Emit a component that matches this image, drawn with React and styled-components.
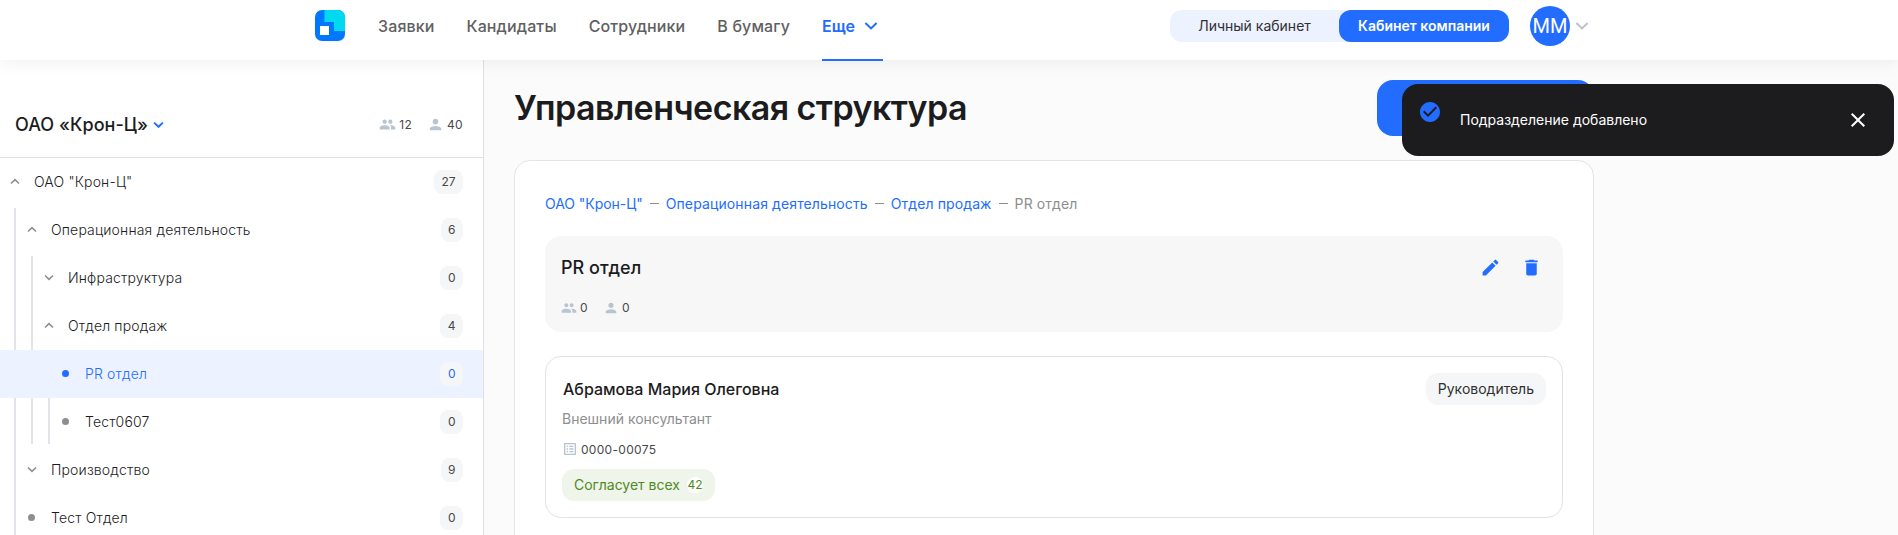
import React from "react";
import styled, { createGlobalStyle } from "styled-components";
import {
  MdPeople,
  MdPerson,
  MdEdit,
  MdDelete,
  MdCheckCircle,
  MdClose,
  MdOutlineListAlt,
} from "react-icons/md";

const color = {
  blue: "#226dff",
  pale: "#ecf2ff",
  ink: "#1c1c1e",
  nav: "#5f5f61",
  muted: "#8e8e90",
  icon: "#b8c4d0",
  line: "#e0e0e2",
  chip: "#f4f6f8",
};

const GlobalStyle = createGlobalStyle`
  *, *::before, *::after { box-sizing: border-box; }
  body {
    margin: 0;
    background: #fbfbfb;
    color: ${color.ink};
    font-family: Inter, "Liberation Sans", sans-serif;
    font-size: 14px;
    overflow: hidden;
  }
  button { font: inherit; border: 0; padding: 0; background: none; color: inherit; }
  h1, h2, h3, p { margin: 0; }
  svg { display: block; flex: none; }
`;

const Page = styled.div`
  height: 535px;
  display: flex;
  flex-direction: column;
  overflow: hidden;
`;

const Header = styled.header`
  position: relative;
  z-index: 2;
  flex: none;
  height: 60px;
  padding-left: 315px;
  display: flex;
  background: #fff;
  box-shadow: 0 0 20px rgba(0, 0, 0, 0.08);
`;

const Logo = styled.svg`
  width: 30px;
  height: 31px;
  margin-top: 10px;
`;

const Nav = styled.nav`
  display: flex;
  gap: 32px;
  margin-left: 33px;
  width: 792px;
`;

const NavItem = styled.a`
  display: flex;
  align-items: center;
  height: 61px;
  padding-bottom: ${(p) => (p.$active ? "8px" : "10px")};
  border-bottom: ${(p) => (p.$active ? `2px solid ${color.blue}` : "0")};
  color: ${(p) => (p.$active ? color.blue : color.nav)};
  font-size: 16px;
  font-weight: ${(p) => (p.$active ? 600 : 500)};
  letter-spacing: ${(p) => (p.$active ? 0 : "0.13px")};
  white-space: nowrap;
  svg { margin: 0 5px 0 9px; }
`;

const Switcher = styled.div`
  display: flex;
  width: 339px;
  height: 32px;
  margin-top: 10px;
  border-radius: 12px;
  background: ${color.pale};
`;

const SwitchOption = styled.button`
  width: ${(p) => (p.$active ? "170px" : "169px")};
  padding-bottom: 2px;
  border-radius: 12px;
  background: ${(p) => (p.$active ? color.blue : "transparent")};
  color: ${(p) => (p.$active ? "#fff" : "#303032")};
  font-weight: ${(p) => (p.$active ? 600 : 400)};
`;

const Account = styled.div`
  display: flex;
  align-items: center;
  gap: 5px;
  height: 40px;
  margin: 6px 0 0 21px;
`;

const Avatar = styled.div`
  display: grid;
  place-items: center;
  width: 40px;
  height: 40px;
  border-radius: 50%;
  background: ${color.blue};
  color: #fff;
  font-family: Roboto, sans-serif;
  font-size: 20px;
`;

const Body = styled.div`
  flex: 1;
  display: flex;
  min-height: 0;
`;

const Sidebar = styled.aside`
  flex: none;
  width: 484px;
  border-right: 1px solid ${color.line};
  background: #fff;
  overflow: hidden;
`;

const SidebarHead = styled.div`
  display: flex;
  align-items: center;
  height: 98px;
  padding: 32px 20px 0 15px;
  border-bottom: 1px solid ${color.line};
`;

const Company = styled.h2`
  display: flex;
  align-items: center;
  gap: 5px;
  margin-right: auto;
  font-size: 18px;
  font-weight: 500;
  letter-spacing: 0.05px;
`;

const Stats = styled.div`
  display: flex;
  gap: 15px;
`;

const Stat = styled.span`
  display: flex;
  align-items: center;
  gap: 3px;
  color: #48484a;
  font-size: 12px;
  letter-spacing: 0.3px;
  line-height: 16px;
  svg { color: ${color.icon}; }
`;

const Row = styled.div`
  display: flex;
  height: 48px;
  align-items: center;
  padding: 0 20px 0 7px;
  background: ${(p) => (p.$active ? color.pale : "transparent")};
  color: ${(p) => (p.$active ? color.blue : color.ink)};
`;

const Guide = styled.span`
  align-self: stretch;
  flex: none;
  width: 2px;
  margin: ${(p) => (p.$start ? 2 : 0)}px 8px ${(p) => (p.$end ? 2 : 0)}px 7px;
  background: ${(p) => (p.$hidden ? "transparent" : "#e0e4e8")};
`;

const Marker = styled.span`
  flex: none;
  display: grid;
  place-items: center;
  width: 16px;
  margin-right: 11px;
  padding-bottom: 1px;
  color: ${(p) => (p.$active ? color.blue : color.muted)};
`;

const Dot = styled.span`
  width: 7px;
  height: 7px;
  margin-right: 1px;
  border-radius: 50%;
  background: currentColor;
`;

const RowLabel = styled.span`
  flex: 1;
  padding-bottom: 1px;
  font-weight: 300;
  letter-spacing: 0.16px;
  white-space: nowrap;
`;

const Count = styled.span`
  display: grid;
  place-items: center;
  height: 24px;
  padding: 0 7.5px 1px;
  border-radius: 8px;
  background: ${color.chip};
  color: ${(p) => (p.$active ? color.blue : "#48484a")};
  font-size: 12px;
`;

const Main = styled.main`
  width: 1110px;
  padding: 20px 0 0 30px;
  display: flex;
  flex-direction: column;
`;

const TitleBar = styled.div`
  flex: none;
  display: flex;
  justify-content: space-between;
  height: 80px;
`;

const Title = styled.h1`
  line-height: 56px;
  font-size: 34px;
  font-weight: 600;
  letter-spacing: -0.54px;
  white-space: nowrap;
`;

const AddButton = styled.button`
  width: 217px;
  height: 56px;
  border-radius: 16px;
  background: ${color.blue};
`;

const Panel = styled.section`
  flex: none;
  height: 480px;
  padding: 32px 30px;
  border: 1px solid #e3e4e6;
  border-radius: 16px;
  background: #fff;
`;

const Crumbs = styled.div`
  display: flex;
  gap: 7px;
  height: 43px;
  line-height: 22px;
  white-space: nowrap;
`;

const Crumb = styled.a`
  color: ${(p) => (p.$current ? color.muted : color.blue)};
  letter-spacing: 0.12px;

  &:first-child { letter-spacing: -0.05px; }
`;

const CrumbDash = styled.i`
  width: 9px;
  height: 1px;
  margin-top: 10px;
  background: ${color.muted};
`;

const Unit = styled.div`
  display: flex;
  justify-content: space-between;
  height: 96px;
  padding: 21px 16px;
  border-radius: 16px;
  background: #f7f7f8;
`;

const UnitName = styled.h3`
  margin-bottom: 21px;
  font-size: 18px;
  font-weight: 500;
  line-height: 22px;
`;

const Actions = styled.div`
  display: flex;
  gap: 20px;
  padding-right: 5px;
  color: ${color.blue};
`;

const Person = styled.article`
  display: flex;
  justify-content: space-between;
  height: 162px;
  margin-top: 24px;
  padding: 16px;
  border: 1px solid #e2e3e8;
  border-radius: 16px;
`;

const PersonName = styled.h3`
  padding: 0 0 2px 1px;
  font-size: 16px;
  font-weight: 500;
  line-height: 32px;
`;

const Position = styled.p`
  margin-top: 2px;
  color: ${color.muted};
  line-height: 20px;
`;

const Code = styled.div`
  display: flex;
  align-items: center;
  gap: 3px;
  height: 16px;
  margin: 12px 0 12px;
  color: #48484a;
  font-size: 12px;
  letter-spacing: 0.3px;
  svg { color: ${color.icon}; }
`;

const Tag = styled.span`
  display: inline-flex;
  align-items: center;
  gap: 7px;
  height: 32px;
  padding: 0 12px 1px;
  border-radius: 12px;
  background: ${(p) => (p.$green ? "#f0f5eb" : color.chip)};
  color: ${(p) => (p.$green ? "#4f8a22" : "#303032")};
`;

const TagCount = styled.b`
  display: grid;
  place-items: center;
  width: 16px;
  height: 16px;
  border-radius: 50%;
  background: #fff;
  font-size: 12px;
  font-weight: 400;
`;

const Toast = styled.div`
  position: fixed;
  z-index: 5;
  top: 84px;
  right: 4px;
  display: flex;
  align-items: center;
  width: 492px;
  height: 72px;
  padding: 0 24px 0 16px;
  border-radius: 16px;
  background: #1c1c1e;
  color: #fff;
`;

const ToastIcon = styled.span`
  align-self: flex-start;
  margin: 16px 18px 0 0;
  color: ${color.blue};
`;

const ToastText = styled.span`
  flex: 1;
  padding-bottom: 2px;
`;

function Chevron({ width = 10, up, stroke = 2, tint = "currentColor" }) {
  return (
    <svg width={width} height={width * 0.7} viewBox="0 0 10 7" fill="none" stroke={tint} strokeWidth={stroke}>
      <path d={up ? "M1 5.500 5 1.700 9 5.500" : "M1 1.500 5 5.300 9 1.500"} />
    </svg>
  );
}

const units = [
  { name: 'ОАО "Крон-Ц"', count: 27, kind: "open", guides: [] },
  { name: "Операционная деятельность", count: 6, kind: "open", guides: ["start"] },
  { name: "Инфраструктура", count: 0, kind: "closed", guides: ["full", "start"] },
  { name: "Отдел продаж", count: 4, kind: "open", guides: ["full", "full"] },
  { name: "PR отдел", count: 0, kind: "leaf", active: true, guides: ["none", "none", "none"] },
  { name: "Тест0607", count: 0, kind: "leaf", guides: ["full", "end", "end"] },
  { name: "Производство", count: 9, kind: "closed", guides: ["full"] },
  { name: "Тест Отдел", count: 0, kind: "leaf", guides: ["full"] },
];

function TreeRow({ unit }) {
  return (
    <Row $active={unit.active}>
      {unit.guides.map((g, i) => (
        <Guide key={i} $start={g === "start"} $end={g === "end"} $hidden={g === "none"} />
      ))}
      <Marker $active={unit.active}>
        {unit.kind === "leaf" ? <Dot /> : <Chevron width={10} stroke={1.6} up={unit.kind === "open"} />}
      </Marker>
      <RowLabel>{unit.name}</RowLabel>
      <Count $active={unit.active}>{unit.count}</Count>
    </Row>
  );
}

const trail = ['ОАО "Крон-Ц"', "Операционная деятельность", "Отдел продаж"];

export default function App() {
  return (
    <Page>
      <GlobalStyle />
      <Header>
        <Logo viewBox="0 0 30 31">
          <rect width="30" height="31" rx="7" fill="#0077ff" />
          <path d="M9.500 0H23a7 7 0 0 1 7 7V21H19V12H9.500Z" fill="#00d9f0" />
          <rect x="5" y="16" width="9" height="9" fill="#fff" />
        </Logo>
        <Nav>
          <NavItem>Заявки</NavItem>
          <NavItem>Кандидаты</NavItem>
          <NavItem>Сотрудники</NavItem>
          <NavItem>В бумагу</NavItem>
          <NavItem $active>
            Еще <Chevron width={14} stroke={1.5} />
          </NavItem>
        </Nav>
        <Switcher>
          <SwitchOption>Личный кабинет</SwitchOption>
          <SwitchOption $active>Кабинет компании</SwitchOption>
        </Switcher>
        <Account>
          <Avatar>ММ</Avatar>
          <Chevron width={14} stroke={1.5} tint={color.icon} />
        </Account>
      </Header>
      <Body>
        <Sidebar>
          <SidebarHead>
            <Company>
              ОАО «Крон-Ц» <Chevron width={11} stroke={1.8} tint={color.blue} />
            </Company>
            <Stats>
              <Stat><MdPeople size={17} />12</Stat>
              <Stat><MdPerson size={17} />40</Stat>
            </Stats>
          </SidebarHead>
          {units.map((unit) => (
            <TreeRow key={unit.name} unit={unit} />
          ))}
        </Sidebar>
        <Main>
          <TitleBar>
            <Title>Управленческая структура</Title>
            <AddButton />
          </TitleBar>
          <Panel>
            <Crumbs>
              {trail.map((name) => (
                <React.Fragment key={name}>
                  <Crumb>{name}</Crumb>
                  <CrumbDash />
                </React.Fragment>
              ))}
              <Crumb $current>PR отдел</Crumb>
            </Crumbs>
            <Unit>
              <div>
                <UnitName>PR отдел</UnitName>
                <Stats>
                  <Stat><MdPeople size={16} />0</Stat>
                  <Stat><MdPerson size={16} />0</Stat>
                </Stats>
              </div>
              <Actions>
                <MdEdit size={21} />
                <MdDelete size={21} />
              </Actions>
            </Unit>
            <Person>
              <div>
                <PersonName>Абрамова Мария Олеговна</PersonName>
                <Position>Внешний консультант</Position>
                <Code><MdOutlineListAlt size={16} />0000-00075</Code>
                <Tag $green>
                  Согласует всех <TagCount>42</TagCount>
                </Tag>
              </div>
              <Tag>Руководитель</Tag>
            </Person>
          </Panel>
        </Main>
      </Body>
      <Toast>
        <ToastIcon><MdCheckCircle size={24} /></ToastIcon>
        <ToastText>Подразделение добавлено</ToastText>
        <MdClose size={24} />
      </Toast>
    </Page>
  );
}
